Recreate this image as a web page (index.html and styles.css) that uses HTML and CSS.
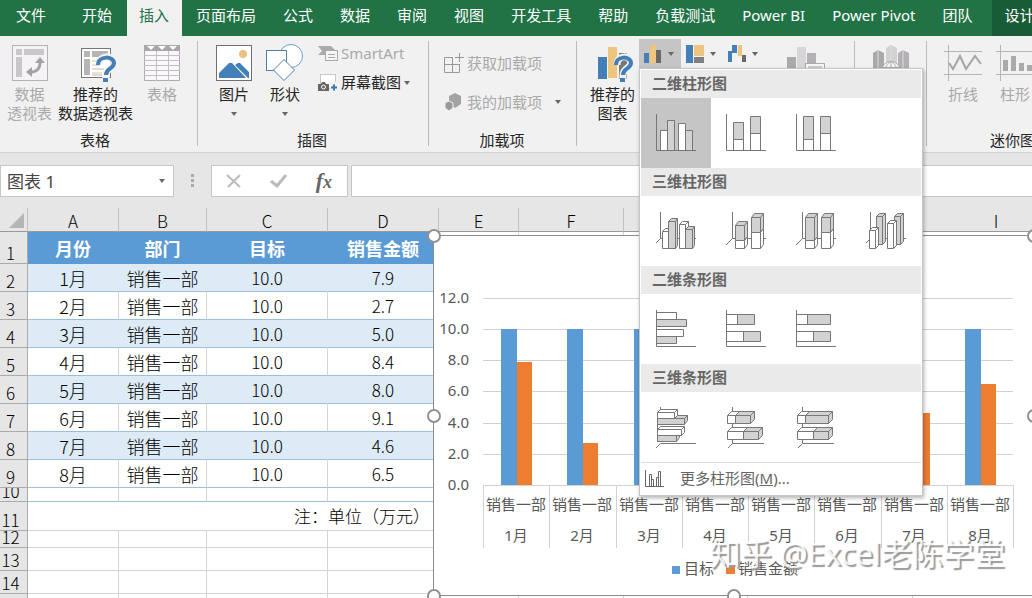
FILE: index.html
```
<!DOCTYPE html>
<html lang="zh-CN">
<head>
  <meta charset="UTF-8">
  <meta name="viewport" content="width=device-width, initial-scale=1.0">
  <title>图表 1</title>
  <link rel="stylesheet" href="styles.css">
</head>
<body>
  <nav class="tabs">
    <button class="tab file">文件</button>
    <button class="tab">开始</button>
    <button class="tab active">插入</button>
    <button class="tab">页面布局</button>
    <button class="tab">公式</button>
    <button class="tab">数据</button>
    <button class="tab">审阅</button>
    <button class="tab">视图</button>
    <button class="tab">开发工具</button>
    <button class="tab">帮助</button>
    <button class="tab">负载测试</button>
    <button class="tab">Power BI</button>
    <button class="tab">Power Pivot</button>
    <button class="tab">团队</button>
    <button class="tab context">设计</button>
  </nav>

  <div class="ribbon">
    <section class="group tables">
      <div class="tools">
        <button class="big" disabled>
          <svg width="36" height="36" viewBox="0 0 36 36"><rect x=".5" y=".5" width="35" height="35" fill="#f6f3f6" stroke="#b5b0b5"/><path d="M4 4h6v6H4zM12 4h20v6H12zM4 12h6v20H4z" fill="#cbc6cb"/><path d="M16 27c8 1 13-3 12-12" fill="none" stroke="#a5a0a5" stroke-width="3"/><path d="M23 18l5-6 5 6zM20 22l-6 5 6 5z" fill="#a5a0a5"/></svg>
          <span>数据<br>透视表</span>
        </button>
        <button class="big">
          <svg width="36" height="36" viewBox="0 0 36 36"><rect x="3.500" y="3.500" width="29" height="29" fill="#fff" stroke="#777"/><path d="M6 6h6v6H6zM14 6h16v6H14zM6 14h6v16H6z" fill="#b5b5b5"/><path d="M14 16h8M14 20h7M14 28h10" stroke="#e3c28a"/><path d="M14 24h12M14 30h10" stroke="#bbb"/><path d="M21 20c0-11 15-10 15-2 0 5-8 5-8 12v5" fill="none" stroke="#f5f5f5" stroke-width="7"/><path d="M20 20c0-10 16-9 16-2 0 6-8 5-8 12" fill="none" stroke="#4480b8" stroke-width="4"/><path d="M25 33h5v4h-5z" fill="#4480b8"/></svg>
          <span>推荐的<br>数据透视表</span>
        </button>
        <button class="big roomy" disabled>
          <svg width="36" height="36" viewBox="0 0 36 36"><path d="M.5.500h35v35H.5z" fill="#fbf8fb" stroke="#b0abb0"/><path d="M0 0h36v6H0z" fill="#aaa5aa"/><path d="M3 1h8L7 5zM14 1h8l-4 4zM25 1h8l-4 4z" fill="#fff"/><path d="M12.500 6v30M24.500 6v30M0 10.500h36M0 15.500h36M0 20.500h36M0 25.500h36M0 30.500h36" stroke="#c5bfc5"/></svg>
          <span>表格</span>
        </button>
      </div>
      <h2>表格</h2>
    </section>
    <div class="divider"></div>

    <section class="group pictures">
      <div class="tools">
        <button class="big">
          <svg width="36" height="36" viewBox="0 0 36 36"><rect x=".5" y=".5" width="35" height="35" fill="#fff" stroke="#707070"/><circle cx="27" cy="9" r="4" fill="#eac282"/><path d="M3 33v-5l10-10h3l14 15zM19 20l3-2h2l9 9v6h-1z" fill="#4480b8"/></svg>
          <span>图片</span><i class="arrow"></i>
        </button>
        <button class="big">
          <svg width="38" height="36" viewBox="0 0 38 36"><circle cx="25" cy="11" r="11.500" fill="#fff" stroke="#6d9cc7"/><rect x=".5" y="5.500" width="20" height="20" fill="#fff" stroke="#4f7faa"/><path d="M18 14.500L28.500 25 18 35.500 7.500 25z" fill="#fff" stroke="#4f7faa"/></svg>
          <span>形状</span><i class="arrow"></i>
        </button>
        <div class="stack">
          <button class="small" disabled>
            <svg width="20" height="18" viewBox="0 0 20 18"><path d="M0 1h13l4 4H7v5H0l4-4z" fill="#aaa"/><rect x="7.500" y="5.500" width="12" height="10" fill="#f5f5f5" stroke="#aaa"/><path d="M10 9.500h7M10 12.500h7" stroke="#aaa"/></svg>
            <span>SmartArt</span>
          </button>
          <button class="small">
            <svg width="20" height="18" viewBox="0 0 20 18"><rect x="2.500" y=".5" width="15" height="14" fill="#fff" stroke="#999" stroke-dasharray="1 1"/><path d="M0 10h3l1-2h3l1 2h3v7H0z" fill="#666"/><circle cx="5.500" cy="13" r="2" fill="#666" stroke="#fff"/><path d="M12 8h8v10h-8z" fill="#f1f1f1"/><path d="M13 13.500h6M16 10.500v6" stroke="#3f78ae" stroke-width="2"/></svg>
            <span>屏幕截图</span><i class="arrow"></i>
          </button>
        </div>
      </div>
      <h2>插图</h2>
    </section>
    <div class="divider"></div>

    <section class="group addins">
      <div class="tools">
        <div class="stack">
          <button class="small" disabled>
            <svg width="20" height="20" viewBox="0 0 20 20"><path d="M9 4.500H.5v15h15V11M8.500 4v15.500M.5 11.500h15M15.500 0v9M11 4.500h9" fill="none" stroke="#999"/></svg>
            <span>获取加载项</span>
          </button>
          <button class="small" disabled>
            <svg width="20" height="20" viewBox="0 0 20 20"><path d="M11 1l6 3v8l-6 4-6-4V4z" fill="#a3a3a3"/><path d="M5 9l4 2v5l-4 3-4-3v-5z" fill="#999" stroke="#f1f1f1"/></svg>
            <span>我的加载项</span><i class="arrow far"></i>
          </button>
        </div>
      </div>
      <h2>加载项</h2>
    </section>
    <div class="divider"></div>

    <section class="group charts">
      <div class="tools">
        <button class="big">
          <svg width="36" height="36" viewBox="0 0 36 36"><path d="M3 12h9v22H3z" fill="#4480b8"/><path d="M13 2h9v31h-9z" fill="#edc57d"/><path d="M24 8h8v26h-8z" fill="#777"/><path d="M22 20c0-11 14-10 14-2 0 5-8 5-8 12v5" fill="none" stroke="#f1f1f1" stroke-width="7"/><path d="M21 20c0-10 15-9 15-2 0 6-8 5-8 12" fill="none" stroke="#4480b8" stroke-width="4"/><path d="M25 33h5v4h-5z" fill="#4480b8"/></svg>
          <span>推荐的<br>图表</span>
        </button>
        <div class="pickers">
          <div class="dropdown">
            <button class="picker open" aria-label="柱形图" aria-expanded="true">
              <svg width="18" height="20" viewBox="0 0 18 20"><path d="M0 9h5v10H0z" fill="#4480b8"/><path d="M6 1h6v18H6z" fill="#edc57d"/><path d="M12 6h5v13h-5z" fill="#686868"/></svg>
              <i class="arrow"></i>
            </button>
            <div class="menu">
              <h3>二维柱形图</h3>
              <div class="tiles">
                <button class="tile chosen" aria-label="簇状柱形图"><svg viewBox="0 0 70 70"><path class="w" d="M19.500 32.500h7v20h-7zM37.500 25.500h7v27h-7z"/><path class="g" d="M26.500 22.500h7v30h-7zM44.500 32.500h7v20h-7z"/><path class="l" d="M15.500 16v36.500H55"/></svg></button>
                <button class="tile" aria-label="堆积柱形图"><svg viewBox="0 0 70 70"><path class="g" d="M22.500 24.500h10v17h-10zM39.500 18.500h10v17h-10z"/><path class="w" d="M22.500 41.500h10v11h-10zM39.500 35.500h10v17h-10z"/><path class="l" d="M15.500 16v36.500H55"/></svg></button>
                <button class="tile" aria-label="百分比堆积柱形图"><svg viewBox="0 0 70 70"><path class="g" d="M22.500 18.500h10v23h-10zM39.500 18.500h10v17h-10z"/><path class="w" d="M22.500 41.500h10v11h-10zM39.500 35.500h10v17h-10z"/><path class="l" d="M15.500 16v36.500H55"/></svg></button>
              </div>
              <h3>三维柱形图</h3>
              <div class="tiles">
                <button class="tile" aria-label="三维簇状柱形图"><svg viewBox="0 0 70 70"><path class="l" d="M19.500 16v26.500L15 47M19.500 42.500H55"/><path class="w" d="M21.500 52.500v-17l3-3h6v17l-3 3zM21.500 35.500h6v17M27.500 35.500l3-3"/><path class="g" d="M27.500 52.500v-27l3-3h6v27l-2 3zM27.500 25.500h7v27M34.500 25.500l2-3"/><path class="w" d="M38.500 52.500v-24l3-3h6v24l-3 3zM38.500 28.500h6v24M44.500 28.500l3-3"/><path class="g" d="M44.500 52.500v-19l3-3h6v19l-2 3zM44.500 33.500h7v19M51.500 33.500l2-3"/></svg></button>
                <button class="tile" aria-label="三维堆积柱形图"><svg viewBox="0 0 70 70"><path class="l" d="M21.500 16v26.500L15 49M21.500 42.500H55"/><path class="g" d="M24.500 44.500v-15l3-4h9v15l-3 4zM24.500 29.500h9v15M33.500 29.500l3-4M40.500 36.500v-15l3-4h9v15l-3 4zM40.500 21.500h9v15M49.500 21.500l3-4"/><path class="w" d="M24.500 44.500h9l3-4v8l-3 4h-9zM33.500 44.500v8M40.500 36.500h9l3-4v16l-3 4h-9zM49.500 36.500v16"/></svg></button>
                <button class="tile" aria-label="三维百分比堆积柱形图"><svg viewBox="0 0 70 70"><path class="l" d="M21.500 16v26.500L15 49M21.500 42.500H55"/><path class="g" d="M24.500 44.500v-23l3-4h9v23l-3 4zM24.500 21.500h9v23M33.500 21.500l3-4M40.500 36.500v-15l3-4h9v15l-3 4zM40.500 21.500h9v15M49.500 21.500l3-4"/><path class="w" d="M24.500 44.500h9l3-4v8l-3 4h-9zM33.500 44.500v8M40.500 36.500h9l3-4v16l-3 4h-9zM49.500 36.500v16"/></svg></button>
                <button class="tile" aria-label="三维柱形图"><svg viewBox="0 0 70 70"><path class="l" d="M19.500 16v26.500L15 47M19.500 42.500H55"/><path class="g" d="M25.500 48.500v-28l3-3h6v28l-3 3zM25.500 20.500h6v28M31.500 20.500l3-3M43.500 48.500v-28l3-3h6v28l-3 3zM43.500 20.500h6v28M49.500 20.500l3-3"/><path class="w" d="M18.500 52.500v-18l3-3h6v18l-3 3zM18.500 34.500h6v18M24.500 34.500l3-3M36.500 52.500v-25l3-3h6v25l-3 3zM36.500 27.500h6v25M42.500 27.500l3-3"/></svg></button>
              </div>
              <h3>二维条形图</h3>
              <div class="tiles">
                <button class="tile" aria-label="簇状条形图"><svg viewBox="0 0 70 70"><path class="w" d="M15.500 18.500h20v7h-20zM15.500 35.500h27v7h-27z"/><path class="g" d="M15.500 25.500h30v7h-30zM15.500 42.500h20v7h-20z"/><path class="l" d="M15.500 16v36.500H55"/></svg></button>
                <button class="tile" aria-label="堆积条形图"><svg viewBox="0 0 70 70"><path class="w" d="M15.500 20.500h11v10h-11zM15.500 37.500h17v10h-17z"/><path class="g" d="M26.500 20.500h17v10h-17zM32.500 37.500h17v10h-17z"/><path class="l" d="M15.500 16v36.500H55"/></svg></button>
                <button class="tile" aria-label="百分比堆积条形图"><svg viewBox="0 0 70 70"><path class="w" d="M15.500 20.500h11v10h-11zM15.500 37.500h17v10h-17z"/><path class="g" d="M26.500 20.500h23v10h-23zM32.500 37.500h17v10h-17z"/><path class="l" d="M15.500 16v36.500H55"/></svg></button>
              </div>
              <h3>三维条形图</h3>
              <div class="tiles">
                <button class="tile" aria-label="三维簇状条形图"><svg viewBox="0 0 70 70"><path class="l" d="M19.500 15v3M16.500 20v30M55 51.500H19.500L15 56"/><path class="g" d="M16.500 26.500l3-3h27v5l-3 4h-27zM16.500 26.500h27v6M43.500 26.500l3-3"/><path class="w" d="M16.500 20.500l3-3h17v6l-3 3h-17zM16.500 20.500h17v6M33.500 20.500l3-3"/><path class="g" d="M16.500 43.500l3-3h19v5l-3 4h-19zM16.500 43.500h19v6M35.500 43.500l3-3"/><path class="w" d="M16.500 37.500l3-3h24v6l-3 3h-24zM16.500 37.500h24v6M40.500 37.500l3-3"/></svg></button>
                <button class="tile" aria-label="三维堆积条形图"><svg viewBox="0 0 70 70"><path class="l" d="M21.500 15v36.500L17 56M21.500 51.500H53"/><path class="w" d="M16.500 23.500l4-4h8l-4 4v8h-8zM16.500 23.500h8M16.500 39.500l4-4h16l-4 4v8h-16zM16.500 39.500h16"/><path class="g" d="M24.500 23.500l4-4h15v8l-4 4h-15zM24.500 23.500h15v8M39.500 23.500l4-4M32.500 39.500l4-4h15v8l-4 4h-15zM32.500 39.500h15v8M47.500 39.500l4-4"/></svg></button>
                <button class="tile" aria-label="三维百分比堆积条形图"><svg viewBox="0 0 70 70"><path class="l" d="M21.500 15v36.500L17 56M21.500 51.500H53"/><path class="w" d="M16.500 23.500l4-4h8l-4 4v8h-8zM16.500 23.500h8M16.500 39.500l4-4h16l-4 4v8h-16zM16.500 39.500h16"/><path class="g" d="M24.500 23.500l4-4h23v8l-4 4h-23zM24.500 23.500h23v8M47.500 23.500l4-4M32.500 39.500l4-4h15v8l-4 4h-15zM32.500 39.500h15v8M47.500 39.500l4-4"/></svg></button>
              </div>
              <button class="more">
                <svg width="20" height="18" viewBox="0 0 20 18"><path d="M.5 0v16.500H19M4.500 16V4.500h2V16M8.500 16V9.500h-2M11.500 16V7.500h2M13.500 16V1.500h2V16" fill="none" stroke="#666"/></svg>
                <span>更多柱形图(<u>M</u>)...</span>
              </button>
            </div>
          </div>
          <button class="picker" aria-label="层次结构图">
            <svg width="18" height="20" viewBox="0 0 18 20"><path d="M0 1h7v18H0z" fill="#4480b8"/><path d="M8 1h10v11H8z" fill="#edc57d"/><path d="M8 13h10v6H8z" fill="#808080"/></svg>
            <i class="arrow"></i>
          </button>
          <button class="picker" aria-label="瀑布图">
            <svg width="18" height="20" viewBox="0 0 18 20"><path d="M0 7h4v11H0zM4 1h5v8H4z" fill="#4480b8"/><path d="M10 1h4v11h-4z" fill="#edc57d"/><path d="M14 11h4v7h-4z" fill="#686868"/></svg>
            <i class="arrow"></i>
          </button>
        </div>
        <button class="big pivot" aria-label="数据透视图" disabled>
          <svg width="38" height="36" viewBox="0 0 38 36"><path d="M0 12h9v24H0z" fill="#aaa"/><path d="M10 2h9v34h-9z" fill="#d6d6d6"/><path d="M20 8h9v28h-9z" fill="#b5b0b5"/><rect x="18.500" y="18.500" width="19" height="17" fill="#f5f5f5" stroke="#aaa"/><path d="M21 21h14v3H21z" fill="#ccc"/></svg>
        </button>
      </div>
    </section>
    <div class="divider"></div>

    <section class="group tours">
      <div class="tools">
        <button class="big" aria-label="三维地图" disabled>
          <svg width="36" height="36" viewBox="0 0 36 36"><path d="M0 8l5-3 6 3v28H0z" fill="#aaa"/><path d="M13 3l5-3 6 3v33H13z" fill="#d2d2d2"/><path d="M25 8l5-3 6 3v28H25z" fill="#b5b0b5"/><path d="M5 5v31M18 0v36M30 5v31" stroke="#ddd"/><circle cx="18" cy="26" r="9.500" fill="#f5f5f5" stroke="#aaa"/><path d="M18 16v20M9 22.500h18M18 16c-8 6-8 14 0 20M18 16c8 6 8 14 0 20" fill="none" stroke="#aaa"/></svg>
        </button>
      </div>
    </section>
    <div class="divider"></div>

    <section class="group sparklines">
      <div class="tools">
        <button class="big" disabled>
          <svg width="38" height="36" viewBox="0 0 38 36"><path d="M4.500 0v36M0 6.500h38M0 29.500h38" stroke="#b5b5b5"/><path d="M5 18l4 6 7-13 6 13 9-13 6 8" fill="none" stroke="#a5a5a5" stroke-width="2"/></svg>
          <span>折线</span>
        </button>
        <button class="big" disabled>
          <svg width="38" height="36" viewBox="0 0 38 36"><path d="M4.500 0v36M0 6.500h38M0 29.500h38" stroke="#b5b5b5"/><path d="M7 15h5v11H7zM15 11h5v15h-5zM23 18h5v8h-5zM31 20h5v6h-5z" fill="#aaa"/></svg>
          <span>柱形</span>
        </button>
      </div>
      <h2>迷你图</h2>
    </section>
  </div>

  <div class="formula-bar">
    <div class="name-box">
      <input type="text" value="图表 1" aria-label="名称框">
      <button aria-label="名称列表"><i class="arrow"></i></button>
    </div>
    <svg class="grip" width="3" height="14" viewBox="0 0 3 14"><path d="M0 0h3v3H0zM0 5h3v3H0zM0 10h3v3H0z" fill="#aaa"/></svg>
    <div class="entry">
      <button aria-label="取消"><svg width="16" height="16" viewBox="0 0 16 16"><path d="M1 2l13 12M14 2L2 14" fill="none" stroke="#bbb" stroke-width="2"/></svg></button>
      <button aria-label="输入"><svg width="18" height="16" viewBox="0 0 18 16"><path d="M1 8l6 5L16 2" fill="none" stroke="#bbb" stroke-width="3"/></svg></button>
      <button class="fx" aria-label="插入函数">f<small>x</small></button>
    </div>
    <input class="formula" type="text" aria-label="编辑栏">
  </div>

  <main class="sheet">
    <table>
      <colgroup>
        <col class="c-num"><col class="c-a"><col class="c-b"><col class="c-c"><col class="c-d"><col class="c-e"><col class="c-f"><col class="c-g"><col class="c-h"><col class="c-i">
      </colgroup>
      <thead>
        <tr>
          <th class="corner"><svg width="16" height="16" viewBox="0 0 16 16"><path d="M15 0v15H0z" fill="#b5b5b5"/></svg></th>
          <th>A</th><th>B</th><th>C</th><th>D</th><th>E</th><th>F</th><th>G</th><th>H</th><th>I</th>
        </tr>
      </thead>
      <tbody id="cells"></tbody>
    </table>
    <svg class="chart" id="chart" width="602" height="362"></svg>
    <div class="watermark">知乎 @Excel老陈学堂</div>
  </main>

  <script>
    const rows = [
      ['1月', '销售一部', 10, 7.9],
      ['2月', '销售一部', 10, 2.7],
      ['3月', '销售一部', 10, 5.0],
      ['4月', '销售一部', 10, 8.4],
      ['5月', '销售一部', 10, 8.0],
      ['6月', '销售一部', 10, 9.1],
      ['7月', '销售一部', 10, 4.6],
      ['8月', '销售一部', 10, 6.5]
    ];

    // 表格
    const rest = '<td class="out"></td>'.repeat(5);
    const head = n => `<th><div>${n}</div></th>`;
    let html = `<tr class="title">${head(1)}<td>月份</td><td>部门</td><td>目标</td><td>销售金额</td>${rest}</tr>`;
    rows.forEach((r, i) => {
      html += `<tr class="data">${head(i + 2)}<td>${r[0]}</td><td>${r[1]}</td><td class="n">${r[2].toFixed(1)}</td><td class="n">${r[3].toFixed(1)}</td>${rest}</tr>`;
    });
    html += `<tr class="thin">${head(10)}<td></td><td></td><td></td><td></td>${rest}</tr>`;
    html += `<tr class="note">${head(11)}<td colspan="4"><div>注：单位（万元）</div></td>${rest}</tr>`;
    [12, 13, 14, 15].forEach(n => {
      html += `<tr class="${n === 12 ? 'short' : 'blank'}">${head(n)}<td></td><td></td><td></td><td></td>${rest}</tr>`;
    });
    document.getElementById('cells').innerHTML = html;

    // 图表
    const left = 50, right = 580, base = 250, unit = 15.6;
    const step = (right - left) / rows.length;
    let svg = '<rect class="frame" x="0.5" y="0.5" width="600" height="360"/>';
    for (let v = 0; v <= 12; v += 2) {
      const y = Math.round(base - v * unit) + 0.5;
      svg += `<path class="grid" d="M${left} ${y}H${right}"/><text x="36" y="${y + 4}" text-anchor="end">${v.toFixed(1)}</text>`;
    }
    rows.forEach((r, i) => {
      const x = Math.round(left + i * step);
      const mid = x + Math.round(step / 2);
      const h1 = Math.round(r[2] * unit), h2 = Math.round(r[3] * unit);
      svg += `<rect class="target" x="${x + 18}" y="${base - h1}" width="16" height="${h1}"/>`;
      svg += `<rect class="sales" x="${x + 34}" y="${base - h2}" width="15" height="${h2}"/>`;
      svg += `<path class="grid" d="M${x + 0.5} ${base}v63"/>`;
      svg += `<text x="${mid}" y="275" text-anchor="middle">${r[1]}</text><text x="${mid}" y="306" text-anchor="middle">${r[0]}</text>`;
    });
    svg += `<path class="grid" d="M${right + 0.5} ${base}v63"/>`;
    svg += '<rect class="target" x="239" y="331" width="8" height="8"/><text x="251" y="339">目标</text>';
    svg += '<rect class="sales" x="293" y="331" width="9" height="8"/><text x="305" y="339">销售金额</text>';
    [[1, 1], [1, 181], [1, 361], [301, 361], [601, 1], [601, 181]].forEach(p => {
      svg += `<circle class="handle" cx="${p[0]}" cy="${p[1]}" r="6"/>`;
    });
    document.getElementById('chart').innerHTML = svg;
  </script>
</body>
</html>
```
FILE: styles.css
```
* {
  box-sizing: border-box;
}
body {
  margin: 0;
  height: 100vh;
  overflow: hidden;
  display: flex;
  flex-direction: column;
  background: #e6e6e6;
  color: #262626;
  font-family: "Noto Sans", "Noto Sans CJK SC", sans-serif;
  font-size: 15px;
  line-height: 19px;
}
button,
input {
  font: inherit;
  color: inherit;
  border: 0;
  padding: 0;
  background: none;
}
button {
  white-space: nowrap;
}
svg {
  display: block;
  flex: none;
}
h2,
h3 {
  margin: 0;
  font-size: 15px;
}

/* 选项卡 */
.tabs {
  display: flex;
  flex: none;
  gap: 2px;
  height: 36px;
  background: #217346;
}
.tab {
  flex: none;
  padding: 0 13px 5px 12px;
  color: #fff;
}
.tab.file {
  padding: 0 22px 5px 16px;
}
.tab.active {
  background: #f1f1f1;
  color: #217346;
}
.tab.context {
  flex: 1 0 auto;
  margin-left: 5px;
  background: #185c37;
  text-align: left;
}

/* 功能区 */
.ribbon {
  display: flex;
  flex: none;
  height: 117px;
  background: #f1f1f1;
  border-bottom: 1px solid #d2d2d2;
}
.divider {
  flex: none;
  width: 1px;
  margin: 5px 0 6px;
  background: #bbb;
}
.group {
  display: flex;
  flex: none;
  flex-direction: column;
  justify-content: space-between;
  padding-bottom: 2px;
}
.group h2 {
  font-weight: normal;
  text-align: center;
}
.tools {
  display: flex;
  align-items: flex-start;
}
.big {
  display: flex;
  flex: none;
  flex-direction: column;
  align-items: center;
  gap: 4px;
  margin-top: 9px;
}
.big svg {
  overflow: visible;
}
.big .arrow {
  margin-top: 4px;
}
.roomy {
  padding: 0 5px;
}
button:disabled {
  color: #a9a9a9;
}
.arrow {
  display: inline-block;
  flex: none;
  width: 0;
  border: 3px solid transparent;
  border-top: 4px solid #666;
  border-bottom: 0;
}
.arrow.far {
  margin-left: 10px;
}
.stack {
  display: flex;
  flex-direction: column;
  align-items: flex-start;
}
.small {
  display: flex;
  align-items: center;
  gap: 3px;
}
.tables {
  width: 197px;
  padding-left: 7px;
}
.tables h2 {
  padding-right: 14px;
}
.tables .tools {
  gap: 6px;
}
.pictures {
  width: 230px;
  padding-left: 18px;
}
.pictures .tools {
  gap: 14px;
}
.pictures h2 {
  padding-right: 20px;
}
.pictures .stack {
  gap: 10px;
  margin-top: 8px;
}
.addins {
  width: 147px;
  padding-left: 15px;
}
.addins h2 {
  padding-right: 16px;
}
.addins .stack {
  gap: 19px;
  margin-top: 17px;
}
.charts {
  width: 277px;
  padding-left: 13px;
}
.charts .tools {
  gap: 4px;
}
.pickers {
  display: flex;
  margin-top: 3px;
}
.picker {
  display: flex;
  align-items: center;
  gap: 6px;
  width: 42px;
  height: 29px;
  padding: 0 5px;
}
.picker.open {
  background: #c5c5c5;
}
.pivot {
  margin-left: 18px;
}
.tours {
  width: 71px;
  align-items: center;
}
.sparklines {
  padding-left: 17px;
}
.sparklines .tools {
  gap: 14px;
}
.sparklines h2 {
  padding-left: 46px;
  text-align: left;
}

/* 图表下拉菜单 */
.dropdown {
  position: relative;
}
.menu {
  position: absolute;
  z-index: 10;
  top: 100%;
  left: 0;
  width: 284px;
  padding: 1px;
  background: #fff;
  border: 1px solid #c6c6c6;
  box-shadow: 1px 2px 4px rgba(0, 0, 0, 0.3);
  color: #666;
}
.menu h3 {
  height: 28px;
  padding-left: 11px;
  background: #eaeaea;
  line-height: 27px;
}
.tiles {
  display: flex;
}
.tile {
  width: 70px;
  height: 70px;
}
.tile.chosen {
  background: #c5c5c5;
}
.tile path {
  stroke: #777;
}
.tile .w {
  fill: #fff;
}
.tile .g {
  fill: #d2d2d2;
}
.tile .l {
  fill: none;
}
.more {
  display: flex;
  align-items: center;
  gap: 15px;
  width: 100%;
  height: 32px;
  padding-left: 4px;
  border-top: 1px solid #dcdcdc;
}

/* 编辑栏 */
.formula-bar {
  display: flex;
  flex: none;
  align-items: center;
  padding: 12px 0 11px;
}
.name-box,
.entry,
.formula {
  height: 32px;
  background: #fff;
  border: 1px solid #c6c6c6;
}
.name-box {
  display: flex;
  width: 174px;
}
.name-box input {
  flex: 1;
  min-width: 0;
  padding-left: 6px;
  color: #444;
  font-size: 17px;
}
.name-box button {
  display: flex;
  align-items: center;
  justify-content: center;
  width: 22px;
}
.grip {
  margin: 0 17px;
}
.entry {
  display: flex;
  align-items: center;
  justify-content: space-between;
  width: 137px;
  padding: 0 15px 0 14px;
}
.fx {
  color: #666;
  font: italic bold 22px/24px "Liberation Serif", serif;
}
.fx small {
  font-size: 18px;
}
.formula {
  flex: 1;
  min-width: 0;
  margin-left: 3px;
  border-right: 0;
}

/* 工作表 */
.sheet {
  position: relative;
  flex: 1;
  min-height: 0;
  overflow: hidden;
}
table {
  width: 1080px;
  table-layout: fixed;
  border-collapse: separate;
  border-spacing: 0;
  background: #fff;
  color: #000;
  font-family: "Noto Sans CJK SC", sans-serif;
  font-size: 18px;
  font-weight: 300;
  line-height: 20px;
}
.c-num { width: 28px; }
.c-a { width: 91px; }
.c-b { width: 88px; }
.c-c { width: 121px; }
.c-d { width: 111px; }
.c-e { width: 80px; }
.c-f { width: 105px; }
.c-g { width: 124px; }
.c-h { width: 165px; }
.c-i { width: 167px; }
th,
td {
  padding: 0;
  border-right: 1px solid #d4d4d4;
  border-bottom: 1px solid #d4d4d4;
  text-align: center;
}
th {
  background: #e6e6e6;
  border-color: #ababab;
  font-size: 17px;
  font-weight: 300;
}
thead th {
  height: 24px;
  padding-top: 2px;
  border-right-color: #c0c0c0;
  border-bottom-color: #999;
}
.corner svg {
  margin-left: 9px;
}
tbody th div {
  display: flex;
  align-items: flex-end;
  justify-content: center;
  height: 27px;
  padding-right: 6px;
}
.title th div {
  height: 31px;
}
.title td {
  background: #5b9bd5;
  border-color: #5b9bd5;
  color: #fff;
  font-weight: bold;
}
.data td {
  border-bottom-color: #9bbfdd;
}
.data:nth-child(even) td {
  background: #ddebf7;
  border-right-color: #ddebf7;
}
tr .out,
.data:nth-child(even) .out {
  background: #fff;
  border-color: #d4d4d4;
}
.data .n {
  font-size: 17px;
}
.thin th div {
  height: 13px;
  overflow: hidden;
}
.thin td {
  border-bottom-color: #9bbfdd;
}
.note th div,
.note td div {
  height: 28px;
}
.note td div {
  padding-right: 8px;
  font-size: 17px;
  line-height: 28px;
  text-align: right;
}
.short th div {
  height: 16px;
}
.blank th div {
  height: 22px;
}

/* 浮动图表 */
.chart {
  position: absolute;
  top: 27px;
  left: 433px;
  overflow: visible;
}
.chart text {
  fill: #595959;
  font-size: 15px;
}
.frame {
  fill: #fff;
  stroke: #8c8c8c;
}
.grid {
  fill: none;
  stroke: #d2d2d2;
}
.target {
  fill: #5b9bd5;
}
.sales {
  fill: #ed7d31;
}
.handle {
  fill: #fff;
  stroke: #919191;
  stroke-width: 2;
}
.watermark {
  position: absolute;
  right: 27px;
  bottom: 25px;
  color: rgba(255, 255, 255, 0.85);
  font-size: 31px;
  line-height: 40px;
  text-shadow: 2px 2px 1px #999;
}
```
